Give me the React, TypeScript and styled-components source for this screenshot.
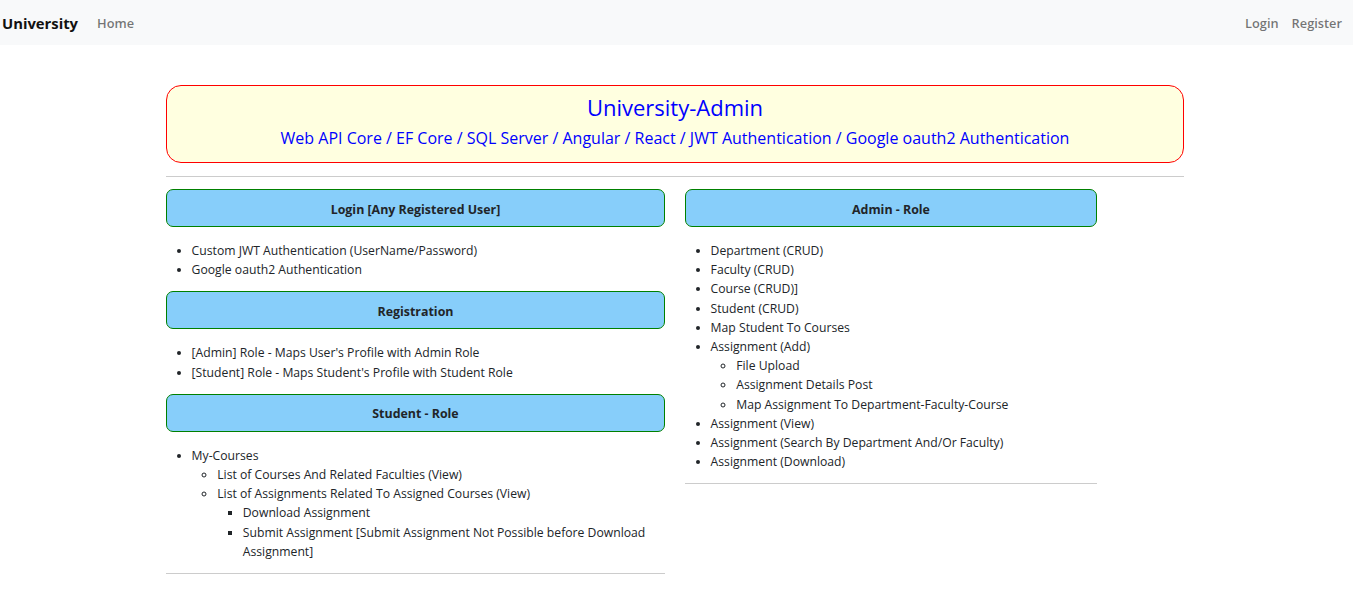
import React from "react";
import styled, { createGlobalStyle } from "styled-components";

const FONT = `"Open Sans", "Noto Sans", "Liberation Sans", sans-serif`;

const Global = createGlobalStyle`
  html, body { margin: 0; padding: 0; background: #fff; }
  body { font-family: ${FONT}; color: #212529; }
`;

const Navbar = styled.nav`
  height: 45px;
  background: #f8f9fa;
  display: flex;
  align-items: center;
  padding: 0 11px 0 2px;
`;

const Brand = styled.a`
  font-size: 14.8px;
  font-weight: 700;
  color: #111;
  margin-right: 19px;
  text-decoration: none;
`;

const NavLink = styled.a`
  font-size: 12.8px;
  font-weight: 600;
  color: rgba(0, 0, 0, 0.55);
  text-decoration: none;
  & + & { margin-left: 13px; }
`;

const NavRight = styled.div`
  margin-left: auto;
  display: flex;
`;

const Main = styled.main`
  width: 1018px;
  margin: 40px 0 0 calc(50% - 510.5px);
`;

const Banner = styled.div`
  box-sizing: border-box;
  height: 78px;
  padding-top: 8px;
  border: 1px solid #ff0000;
  border-radius: 15px;
  background: #ffffe0;
  display: flex;
  flex-direction: column;
  align-items: center;
  gap: 7px;
  color: #0000ff;
`;

const BannerTitle = styled.div`
  font-size: 22px;
  font-weight: 500;
  line-height: 26px;
`;

const BannerSub = styled.div`
  font-size: 16px;
  font-weight: 500;
  line-height: 22px;
`;

const Rule = styled.hr<{ $top?: number }>`
  border: 0;
  border-top: 1px solid #cccccc;
  margin: ${(p) => p.$top ?? 13}px 0 0;
`;

const Columns = styled.div`
  display: grid;
  grid-template-columns: 499px 412px;
  column-gap: 20px;
  align-items: start;
  margin-top: 12px;
`;

const Column = styled.section``;

const SectionHead = styled.div`
  box-sizing: border-box;
  height: 38px;
  padding-top: 2px;
  border: 1px solid #008000;
  border-radius: 7px;
  background: #87cefa;
  display: flex;
  align-items: center;
  justify-content: center;
  font-size: 12.4px;
  font-weight: 700;
  color: #212529;
`;

const List = styled.ul<{ $level?: number }>`
  margin: ${(p) => (p.$level ? "0" : "14px 0 12px")};
  padding-left: 25.6px;
  list-style-type: ${(p) => (p.$level === 1 ? "circle" : p.$level === 2 ? "square" : "disc")};
  font-size: 12.2px;
  line-height: 19.2px;
`;

const Item = styled.li``;

export default function App() {
  return (
    <>
      <Global />
      <Navbar>
        <Brand href="#">University</Brand>
        <NavLink href="#">Home</NavLink>
        <NavRight>
          <NavLink href="#">Login</NavLink>
          <NavLink href="#">Register</NavLink>
        </NavRight>
      </Navbar>
      <Main>
        <Banner>
          <BannerTitle>University-Admin</BannerTitle>
          <BannerSub>
            Web API Core / EF Core / SQL Server / Angular / React / JWT Authentication / Google oauth2 Authentication
          </BannerSub>
        </Banner>
        <Rule $top={13} />
        <Columns>
          <Column>
            <SectionHead>Login [Any Registered User]</SectionHead>
            <List>
              <Item>Custom JWT Authentication (UserName/Password)</Item>
              <Item>Google oauth2 Authentication</Item>
            </List>
            <SectionHead>Registration</SectionHead>
            <List>
              <Item>[Admin] Role - Maps User's Profile with Admin Role</Item>
              <Item>[Student] Role - Maps Student's Profile with Student Role</Item>
            </List>
            <SectionHead>Student - Role</SectionHead>
            <List>
              <Item>
                My-Courses
                <List $level={1}>
                  <Item>List of Courses And Related Faculties (View)</Item>
                  <Item>
                    List of Assignments Related To Assigned Courses (View)
                    <List $level={2}>
                      <Item>Download Assignment</Item>
                      <Item>Submit Assignment [Submit Assignment Not Possible before Download Assignment]</Item>
                    </List>
                  </Item>
                </List>
              </Item>
            </List>
            <Rule $top={0} />
          </Column>
          <Column>
            <SectionHead>Admin - Role</SectionHead>
            <List>
              <Item>Department (CRUD)</Item>
              <Item>Faculty (CRUD)</Item>
              <Item>Course (CRUD)]</Item>
              <Item>Student (CRUD)</Item>
              <Item>Map Student To Courses</Item>
              <Item>
                Assignment (Add)
                <List $level={1}>
                  <Item>File Upload</Item>
                  <Item>Assignment Details Post</Item>
                  <Item>Map Assignment To Department-Faculty-Course</Item>
                </List>
              </Item>
              <Item>Assignment (View)</Item>
              <Item>Assignment (Search By Department And/Or Faculty)</Item>
              <Item>Assignment (Download)</Item>
            </List>
            <Rule $top={0} />
          </Column>
        </Columns>
      </Main>
    </>
  );
}
